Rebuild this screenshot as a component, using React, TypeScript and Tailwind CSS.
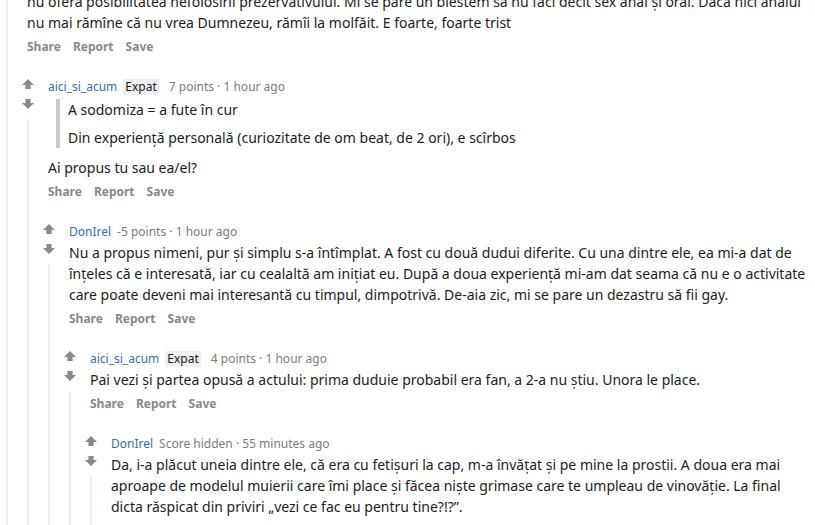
import React from 'react'

type Block =
  | { type: 'p'; text: string }
  | { type: 'quote'; lines: string[] }

interface CommentData {
  author?: string
  flair?: string
  score?: string
  time?: string
  body: Block[]
  children?: CommentData[]
}

const thread: CommentData = {
  body: [
    {
      type: 'p',
      text: 'nu oferă posibilitatea nefolosirii prezervativului. Mi se pare un blestem să nu faci decît sex anal și oral. Dacă nici analul nu mai rămîne că nu vrea Dumnezeu, rămîi la molfăit. E foarte, foarte trist',
    },
  ],
  children: [
    {
      author: 'aici_si_acum',
      flair: 'Expat',
      score: '7 points',
      time: '1 hour ago',
      body: [
        {
          type: 'quote',
          lines: [
            'A sodomiza = a fute în cur',
            'Din experiență personală (curiozitate de om beat, de 2 ori), e scîrbos',
          ],
        },
        { type: 'p', text: 'Ai propus tu sau ea/el?' },
      ],
      children: [
        {
          author: 'DonIrel',
          score: '-5 points',
          time: '1 hour ago',
          body: [
            {
              type: 'p',
              text: 'Nu a propus nimeni, pur și simplu s-a întîmplat. A fost cu două dudui diferite. Cu una dintre ele, ea mi-a dat de înțeles că e interesată, iar cu cealaltă am inițiat eu. După a doua experiență mi-am dat seama că nu e o activitate care poate deveni mai interesantă cu timpul, dimpotrivă. De-aia zic, mi se pare un dezastru să fii gay.',
            },
          ],
          children: [
            {
              author: 'aici_si_acum',
              flair: 'Expat',
              score: '4 points',
              time: '1 hour ago',
              body: [
                {
                  type: 'p',
                  text: 'Pai vezi și partea opusă a actului: prima duduie probabil era fan, a 2-a nu știu. Unora le place.',
                },
              ],
              children: [
                {
                  author: 'DonIrel',
                  score: 'Score hidden',
                  time: '55 minutes ago',
                  body: [
                    {
                      type: 'p',
                      text: 'Da, i-a plăcut uneia dintre ele, că era cu fetișuri la cap, m-a învățat și pe mine la prostii. A doua era mai aproape de modelul muierii care îmi place și făcea niște grimase care te umpleau de vinovăție. La final dicta răspicat din priviri „vezi ce fac eu pentru tine?!?”.',
                    },
                  ],
                },
              ],
            },
          ],
        },
      ],
    },
  ],
}

const VoteArrow = ({ down = false }: { down?: boolean }) => (
  <svg width="12" height="10" viewBox="0 0 12 10" className={`block shrink-0 ${down ? 'rotate-180' : ''}`}>
    <path d="M6 0 L12 6 L8.6 6 L8.6 10 L3.4 10 L3.4 6 L0 6 Z" fill="#878a8c" />
  </svg>
)

const Body = ({ blocks }: { blocks: Block[] }) => (
  <div className="text-[14px] leading-[21px] text-[#1c1c1c]">
    {blocks.map((b, i) =>
      b.type === 'quote' ? (
        <div key={i} className="mt-[2px] mb-[9px] ml-[8px] border-l-4 border-[#c9c9c9] pl-[8px] flex flex-col gap-[7px]">
          {b.lines.map((l, j) => (
            <p key={j}>{l}</p>
          ))}
        </div>
      ) : (
        <p key={i}>{b.text}</p>
      )
    )}
  </div>
)

const Comment = ({ data, root = false }: { data: CommentData; root?: boolean }) => {
  return (
    <div className={`flex ${root ? '' : 'mt-[19px]'}`}>
      {/* vote column + thread line */}
      <div className="w-[14px] flex flex-col items-center shrink-0">
        {!root && (
          <>
            <div className="pt-[3px]">
              <VoteArrow />
            </div>
            <div className="mt-[10px]">
              <VoteArrow down />
            </div>
          </>
        )}
        <div className={`w-[2px] flex-1 bg-[#edeff1] ${root ? '' : 'mt-[10px]'}`} />
      </div>

      <div className="flex-1 min-w-0 ml-[7px]">
        <div className="pl-[6px]">
          {data.author && (
            <div className="flex items-center h-[21px] text-[12px] whitespace-nowrap">
              <span className="text-[#3a6ea5]">{data.author}</span>
              {data.flair && (
                <span className="ml-[6px] px-[2px] h-[16px] leading-[16px] bg-[#edeff1] rounded-[2px] text-[#1c1c1c]">
                  {data.flair}
                </span>
              )}
              <span className={`${data.flair ? 'ml-[10px]' : 'ml-[6px]'} text-[#7c7c7c]`}>
                {data.score} · {data.time}
              </span>
            </div>
          )}
          <Body blocks={data.body} />
          <div className="mt-[3px] h-[21px] flex items-center gap-[12px] text-[12px] font-bold text-[#878a8c]">
            <span>Share</span>
            <span>Report</span>
            <span>Save</span>
          </div>
        </div>
        {data.children?.map((c, i) => (
          <Comment key={i} data={c} />
        ))}
      </div>
    </div>
  )
}

export default function App() {
  return (
    <div
      className="w-[815px] h-screen overflow-hidden bg-white pr-[8px]"
      style={{ fontFamily: '"Noto Sans", Arial, sans-serif' }}
    >
      <div className="-mt-[9px]">
        <Comment data={thread} root />
      </div>
    </div>
  )
}
